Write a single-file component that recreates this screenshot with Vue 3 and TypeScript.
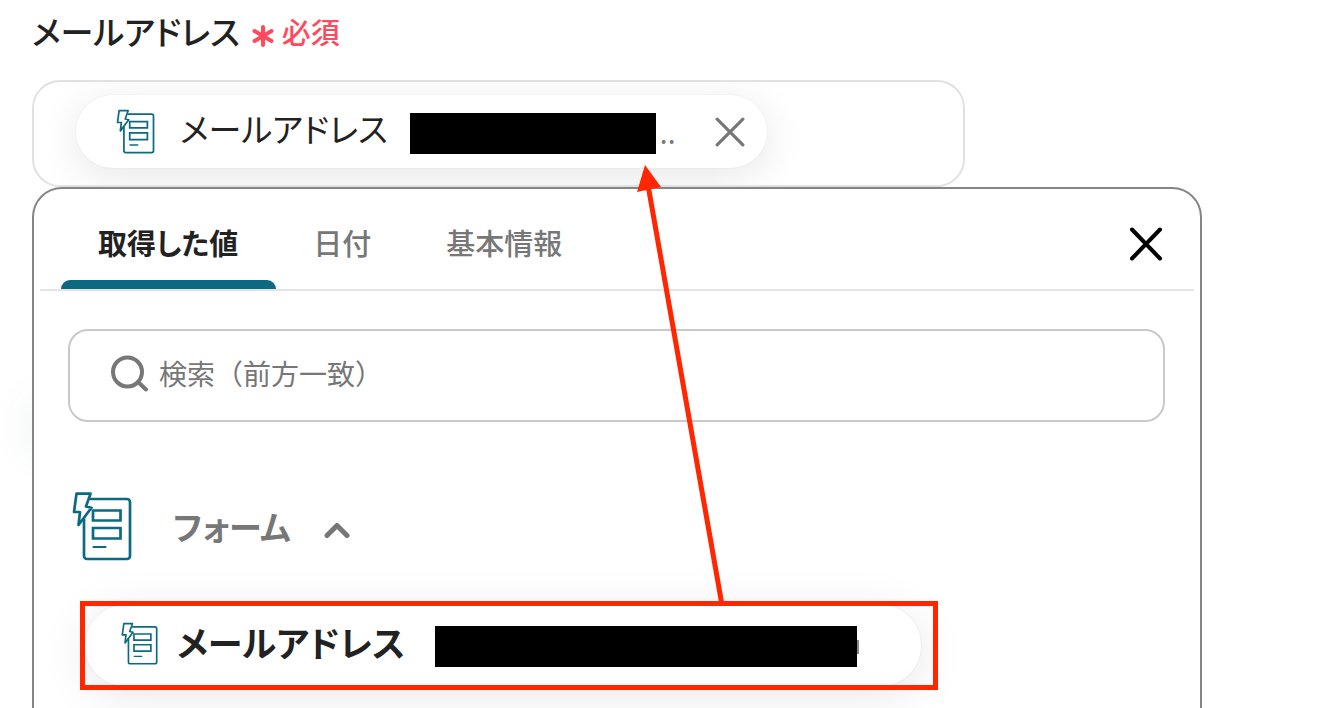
<script setup lang="ts">
import { ref, h } from 'vue'

const tabs = ['取得した値', '日付', '基本情報']
const active = ref(0)
const keyword = ref('')
const open = ref(true)

const FormIcon = () =>
  h(
    'svg',
    {
      viewBox: '0 0 60 70',
      fill: 'none',
      stroke: '#0b6a82',
      'stroke-width': 2.7,
      'stroke-linejoin': 'round',
      'stroke-linecap': 'round',
      'aria-hidden': 'true',
    },
    [
      h('path', { d: 'M19 8H55a3 3 0 0 1 3 3V65a3 3 0 0 1-3 3H15a3 3 0 0 1-3-3V28' }),
      h('path', { d: 'M4.5 2.7H18.5L14 15.5L19.5 16.7L6.5 34L8 21H2Z' }),
      h('path', { 'stroke-linejoin': 'miter', d: 'M21 19.5H48.5V29.5H21ZM21 37H48.5V47.5H21Z' }),
      h('path', { 'stroke-width': 2.2, d: 'M21.5 56H33.5' }),
    ],
  )
</script>

<template>
  <main class="page">
    <h1 class="label">
      <span>メールアドレス</span>
      <span class="required">
        <svg class="asterisk" viewBox="0 0 22 22" aria-hidden="true">
          <path d="M11 2V20M2.5 6L19.5 16M19.5 6L2.5 16" />
        </svg>
        必須
      </span>
    </h1>

    <div class="field">
      <div class="chip">
        <FormIcon class="icon-small" />
        <span class="chip-name">メールアドレス</span>
        <span class="mask mask-short"></span>
        <span class="dots">..</span>
        <button class="plain remove" type="button" aria-label="削除">
          <svg viewBox="0 0 28 28"><path d="M2 2L26 26M26 2L2 26" /></svg>
        </button>
      </div>
    </div>

    <div class="panel-wrap">
      <span class="glow"></span>
      <section class="panel">
        <header class="panel-head">
          <nav class="tabs">
            <button
              v-for="(tab, i) in tabs"
              :key="tab"
              type="button"
              class="plain tab"
              :class="{ active: active === i }"
              @click="active = i"
            >
              {{ tab }}
            </button>
          </nav>
          <button class="plain close" type="button" aria-label="閉じる">
            <svg viewBox="0 0 34 34"><path d="M3 2.5L31 31.5M31 2.5L3 31.5" /></svg>
          </button>
        </header>

        <label class="search">
          <svg viewBox="0 0 40 38" aria-hidden="true">
            <circle cx="17.5" cy="18" r="14.5" />
            <path d="M28 28L36 35.5" />
          </svg>
          <input v-model="keyword" type="text" placeholder="検索（前方一致）" aria-label="検索（前方一致）" />
        </label>

        <button class="plain group" type="button" :aria-expanded="open" @click="open = !open">
          <FormIcon class="icon-large" />
          <span>フォーム</span>
          <svg class="chevron" viewBox="0 0 28 18" aria-hidden="true"><path d="M4 14.5L14 4.5L24 14.5" /></svg>
        </button>

        <button v-if="open" class="plain option" type="button">
          <FormIcon class="icon-small" />
          <span class="option-name">メールアドレス</span>
          <span class="mask mask-long"></span>
        </button>
      </section>
    </div>

    <svg class="arrow" viewBox="0 0 100 440" aria-hidden="true">
      <path class="shaft" d="M86 440L12 20" />
      <path class="head" d="M9 0L25 22L1 27Z" />
    </svg>
  </main>
</template>

<style>
body {
  margin: 0;
  background: #fff;
}
</style>

<style scoped>
.page {
  position: relative;
  box-sizing: border-box;
  height: 100vh;
  overflow: hidden;
  padding: 7px 32px 0;
  background: #fff;
  color: #222;
  font-family: "Noto Sans CJK JP", "Noto Sans", sans-serif;
  font-feature-settings: "palt";
}
.plain {
  margin: 0;
  padding: 0;
  border: 0;
  background: none;
  color: inherit;
  font: inherit;
  font-feature-settings: inherit;
  cursor: pointer;
}
svg {
  display: block;
  flex: none;
}
.label {
  display: flex;
  align-items: center;
  gap: 12px;
  margin: 0 0 25px;
  font-size: 33px;
  line-height: 48px;
  font-weight: 500;
}
.required {
  display: flex;
  align-items: center;
  gap: 8px;
  color: #ff4a5d;
  font-size: 29px;
}
.asterisk {
  width: 22px;
  height: 22px;
  margin-top: 9px;
  fill: none;
  stroke: currentColor;
  stroke-width: 4;
  stroke-linecap: round;
}
.field {
  box-sizing: border-box;
  display: flex;
  width: 73.5%;
  padding: 13px 42px 17px;
  overflow: hidden;
  border: 2px solid #e0e1e4;
  border-radius: 28px;
}
.chip {
  display: flex;
  align-items: center;
  box-sizing: border-box;
  height: 73px;
  padding: 0 22px 0 40px;
  border-radius: 37px;
  background: #fff;
  box-shadow: 0 8px 40px rgba(0, 0, 0, 0.1), 0 0 2px rgba(0, 0, 0, 0.06);
}
.icon-small {
  width: 39px;
  height: 45px;
}
.chip-name {
  margin: 0 22px 0 25px;
  padding-bottom: 7px;
  font-size: 33px;
  line-height: 48px;
}
.mask {
  flex: none;
  height: 41px;
  margin-top: 3px;
  background: #000;
}
.mask-short {
  width: 246px;
}
.dots {
  margin: 0 40px 0 4px;
  color: #777;
  font-size: 28px;
}
.remove svg {
  width: 30px;
  height: 30px;
  fill: none;
  stroke: #777;
  stroke-width: 3;
  stroke-linecap: round;
}
.panel-wrap {
  position: relative;
  width: 92.1%;
}
.glow {
  position: absolute;
  top: 220px;
  left: 0;
  width: 40px;
  height: 40px;
  border-radius: 20px;
  background: #0b6a82;
  box-shadow: 0 0 44px 8px rgba(11, 106, 82, 0.07);
}
.panel {
  position: relative;
  box-sizing: border-box;
  min-height: 560px;
  padding: 0 6px 40px;
  border: 2px solid #858585;
  border-radius: 30px;
  background: #fff;
}
.panel-head {
  display: flex;
  align-items: center;
  justify-content: space-between;
  height: 100px;
  padding: 0 31px 0 21px;
  border-bottom: 2px solid #e4e4e4;
}
.tabs {
  display: flex;
  align-self: stretch;
}
.tab {
  position: relative;
  padding: 6px 38px 0 37px;
  color: #777;
  font-size: 29px;
  font-weight: 500;
}
.tab.active {
  color: #222;
  font-weight: 700;
}
.tab.active::after {
  content: "";
  position: absolute;
  inset: auto 0 0;
  height: 9px;
  border-radius: 9px 9px 0 0;
  background: #0b6a82;
}
.close {
  margin-top: 10px;
}
.close svg {
  width: 34px;
  height: 34px;
  fill: none;
  stroke: #000;
  stroke-width: 4;
  stroke-linecap: round;
}
.search {
  display: flex;
  align-items: center;
  gap: 9px;
  box-sizing: border-box;
  height: 93px;
  margin: 38px 29px 0 28px;
  padding: 0 40px 6px;
  border: 2px solid #c9c9c9;
  border-radius: 20px;
}
.search svg {
  width: 40px;
  height: 38px;
  fill: none;
  stroke: #777;
  stroke-width: 4;
  stroke-linecap: round;
}
.search input {
  flex: 1;
  min-width: 0;
  height: 48px;
  padding: 0;
  border: 0;
  outline: 0;
  background: none;
  color: #222;
  font-family: inherit;
  font-feature-settings: normal;
  font-size: 28px;
}
.search input::placeholder {
  color: #777;
  opacity: 1;
}
.group {
  display: flex;
  align-items: center;
  margin: 69px 0 0 32px;
  color: #777;
  font-size: 33px;
  line-height: 48px;
  font-weight: 700;
}
.icon-large {
  width: 60px;
  height: 70px;
  margin-right: 41px;
}
.chevron {
  width: 28px;
  height: 18px;
  margin: 8px 0 0 32px;
  fill: none;
  stroke: #777;
  stroke-width: 5;
  stroke-linecap: round;
  stroke-linejoin: round;
}
.option {
  position: relative;
  display: flex;
  align-items: center;
  width: 72.5%;
  height: 81px;
  margin: 44px 0 0 45px;
  padding: 0 0 0 35px;
  border-radius: 40px;
  background: #fff;
  box-shadow: 0 8px 48px rgba(0, 0, 0, 0.1), 0 0 2px rgba(0, 0, 0, 0.08);
}
.option::after {
  content: "";
  position: absolute;
  inset: -4px -17px -4px -5px;
  border: 5px solid #ff2600;
}
.option .icon-small {
  height: 43px;
  margin-bottom: 5px;
}
.option-name {
  margin: 0 30px 0 18px;
  padding-bottom: 8px;
  font-size: 35px;
  line-height: 48px;
  font-weight: 700;
}
.mask-long {
  width: 422px;
  margin-top: 1px;
}
.mask-long::after {
  content: "";
  display: block;
  width: 2px;
  height: 14px;
  margin: 14px 0 0 422px;
  background: #888;
}
.arrow {
  position: absolute;
  top: 165px;
  left: 636px;
  width: 100px;
  height: 440px;
  pointer-events: none;
}
.shaft {
  fill: none;
  stroke: #ff2600;
  stroke-width: 5;
}
.head {
  fill: #ff2600;
}
</style>
